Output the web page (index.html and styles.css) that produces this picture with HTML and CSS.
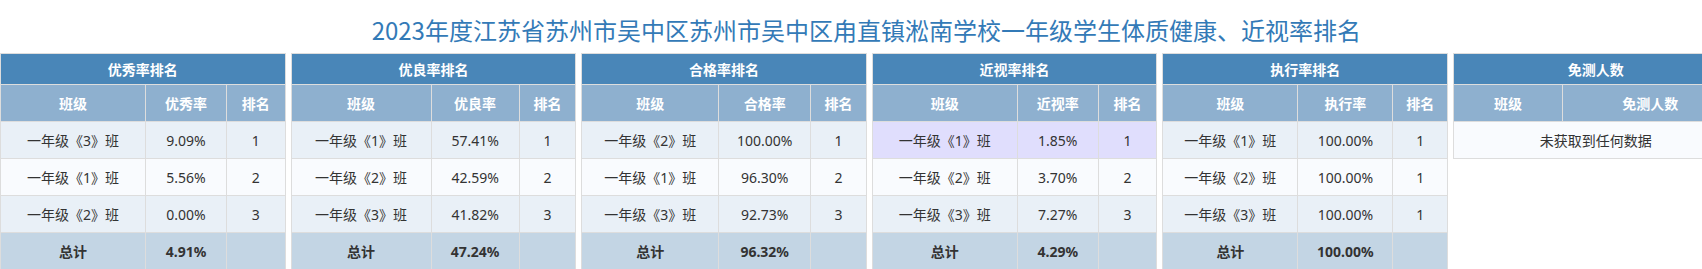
FILE: index.html
```html
<!DOCTYPE html>
<html lang="zh-CN">
<head>
<meta charset="utf-8">
<title>体质健康、近视率排名</title>
<link rel="stylesheet" href="styles.css">
</head>
<body>
<div class="page">
  <div class="sheet">
    <h1 class="title">2023年度江苏省苏州市吴中区苏州市吴中区甪直镇淞南学校一年级学生体质健康、近视率排名</h1>
    <div class="panels">

      <div class="panel p1">
        <div class="cap">优秀率排名</div>
        <div class="tr head"><div>班级</div><div>优秀率</div><div>排名</div></div>
        <div class="tr odd"><div>一年级《3》班</div><div>9.09%</div><div>1</div></div>
        <div class="tr even"><div>一年级《1》班</div><div>5.56%</div><div>2</div></div>
        <div class="tr odd"><div>一年级《2》班</div><div>0.00%</div><div>3</div></div>
        <div class="tr total"><div>总计</div><div>4.91%</div><div></div></div>
      </div>

      <div class="panel p2">
        <div class="cap">优良率排名</div>
        <div class="tr head"><div>班级</div><div>优良率</div><div>排名</div></div>
        <div class="tr odd"><div>一年级《1》班</div><div>57.41%</div><div>1</div></div>
        <div class="tr even"><div>一年级《2》班</div><div>42.59%</div><div>2</div></div>
        <div class="tr odd"><div>一年级《3》班</div><div>41.82%</div><div>3</div></div>
        <div class="tr total"><div>总计</div><div>47.24%</div><div></div></div>
      </div>

      <div class="panel p3">
        <div class="cap">合格率排名</div>
        <div class="tr head"><div>班级</div><div>合格率</div><div>排名</div></div>
        <div class="tr odd"><div>一年级《2》班</div><div>100.00%</div><div>1</div></div>
        <div class="tr even"><div>一年级《1》班</div><div>96.30%</div><div>2</div></div>
        <div class="tr odd"><div>一年级《3》班</div><div>92.73%</div><div>3</div></div>
        <div class="tr total"><div>总计</div><div>96.32%</div><div></div></div>
      </div>

      <div class="panel p4">
        <div class="cap">近视率排名</div>
        <div class="tr head"><div>班级</div><div>近视率</div><div>排名</div></div>
        <div class="tr hl"><div>一年级《1》班</div><div>1.85%</div><div>1</div></div>
        <div class="tr even"><div>一年级《2》班</div><div>3.70%</div><div>2</div></div>
        <div class="tr odd"><div>一年级《3》班</div><div>7.27%</div><div>3</div></div>
        <div class="tr total"><div>总计</div><div>4.29%</div><div></div></div>
      </div>

      <div class="panel p5">
        <div class="cap">执行率排名</div>
        <div class="tr head"><div>班级</div><div>执行率</div><div>排名</div></div>
        <div class="tr odd"><div>一年级《1》班</div><div>100.00%</div><div>1</div></div>
        <div class="tr even"><div>一年级《2》班</div><div>100.00%</div><div>1</div></div>
        <div class="tr odd"><div>一年级《3》班</div><div>100.00%</div><div>1</div></div>
        <div class="tr total"><div>总计</div><div>100.00%</div><div></div></div>
      </div>

      <div class="panel p6">
        <div class="cap">免测人数</div>
        <div class="tr head"><div>班级</div><div>免测人数</div></div>
        <div class="empty">未获取到任何数据</div>
      </div>

    </div>
  </div>
</div>
</body>
</html>
```

FILE: styles.css
```css
html, body {
  margin: 0;
  padding: 0;
  background: #ffffff;
}

body {
  font-family: "Noto Sans", "Noto Sans CJK SC", sans-serif;
  font-size: 14px;
  color: #333333;
}

.page {
  width: 1702px;
  height: 269px;
  overflow: hidden;
}

.sheet {
  width: max-content;
}

.title {
  margin: 0;
  padding: 12px 6px 6px 0;
  height: 35px;
  line-height: 35px;
  font-family: "Noto Sans CJK SC", sans-serif;
  font-size: 24px;
  font-weight: normal;
  color: #337ab7;
  text-align: center;
  white-space: nowrap;
}

.panels {
  display: flex;
  gap: 5px;
  align-items: flex-start;
}

.panel {
  flex: none;
  width: 285.6px;
  box-sizing: border-box;
  display: grid;
  grid-template-rows: 30px repeat(5, 36px);
  gap: 1px;
  padding: 1px;
  background: #dddddd;
}

.p1, .p4 { grid-template-columns: 144px 80px 1fr; }
.p2 { grid-template-columns: 139px 87px 1fr; }
.p3 { grid-template-columns: 136px 91px 1fr; }
.p5 { grid-template-columns: 134px 94px 1fr; }
.p6 {
  grid-template-columns: 108px 1fr;
  grid-template-rows: 30px 36px 36px;
}

.cap {
  grid-column: 1 / -1;
  background: #4986b8;
  color: #ffffff;
  font-weight: bold;
  font-family: "Noto Sans CJK SC", sans-serif;
  display: flex;
  align-items: center;
  justify-content: center;
}

.tr {
  display: contents;
}

.tr > div,
.empty {
  display: flex;
  align-items: center;
  justify-content: center;
  white-space: nowrap;
}

.head > div {
  background: #8eb0cf;
  color: #ffffff;
  font-weight: bold;
  font-family: "Noto Sans CJK SC", sans-serif;
}

.odd > div { background: #e9f0f7; }
.even > div { background: #f9fbfe; }
.hl > div { background: #e0defd; }

.total > div {
  background: #c3d5e4;
  font-weight: bold;
}

.empty {
  grid-column: 1 / -1;
  background: #f9fbfe;
}
```
